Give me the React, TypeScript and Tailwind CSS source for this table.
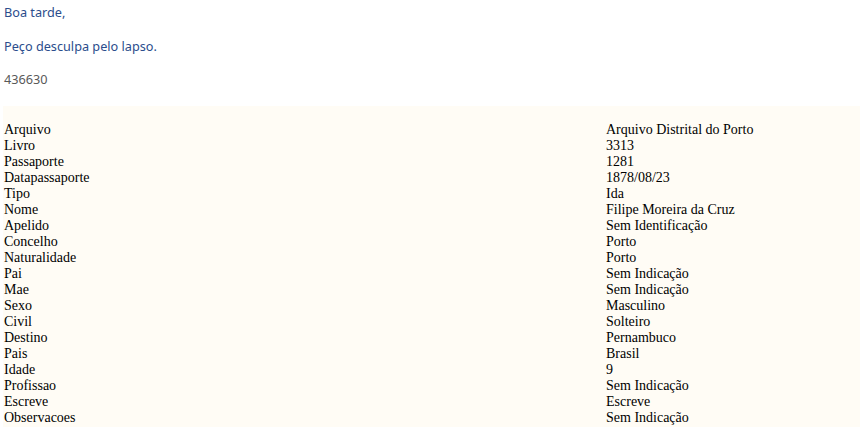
import React from "react";

const rows: [string, string][] = [
  ["Arquivo", "Arquivo Distrital do Porto"],
  ["Livro", "3313"],
  ["Passaporte", "1281"],
  ["Datapassaporte", "1878/08/23"],
  ["Tipo", "Ida"],
  ["Nome", "Filipe Moreira da Cruz"],
  ["Apelido", "Sem Identificação"],
  ["Concelho", "Porto"],
  ["Naturalidade", "Porto"],
  ["Pai", "Sem Indicação"],
  ["Mae", "Sem Indicação"],
  ["Sexo", "Masculino"],
  ["Civil", "Solteiro"],
  ["Destino", "Pernambuco"],
  ["Pais", "Brasil"],
  ["Idade", "9"],
  ["Profissao", "Sem Indicação"],
  ["Escreve", "Escreve"],
  ["Observacoes", "Sem Indicação"],
];

export default function App() {
  return (
    <div className="w-[862px] h-[441px] bg-white overflow-hidden">
      <div className="px-[4px] pt-[3px] text-[12.7px] leading-[18px] text-[#2b4d8c] [font-family:'Noto_Sans',sans-serif]">
        <p className="h-[18px]">Boa tarde,</p>
        <p className="h-[18px] mt-[16px]">Peço desculpa pelo lapso.</p>
        <p className="h-[18px] mt-[15px] text-[#595959]">436630</p>
      </div>
      <div className="mt-[18px] ml-[3px] mr-[2px] bg-[#fffcf5] pt-[16px] pb-[1px] text-[14px] leading-[16px] text-black [font-family:'Liberation_Serif',serif]">
        {rows.map(([k, v]) => (
          <div key={k} className="grid grid-cols-[603px_1fr] h-[16px]">
            <div className="pl-[1px]">{k}</div>
            <div>{v}</div>
          </div>
        ))}
      </div>
    </div>
  );
}
